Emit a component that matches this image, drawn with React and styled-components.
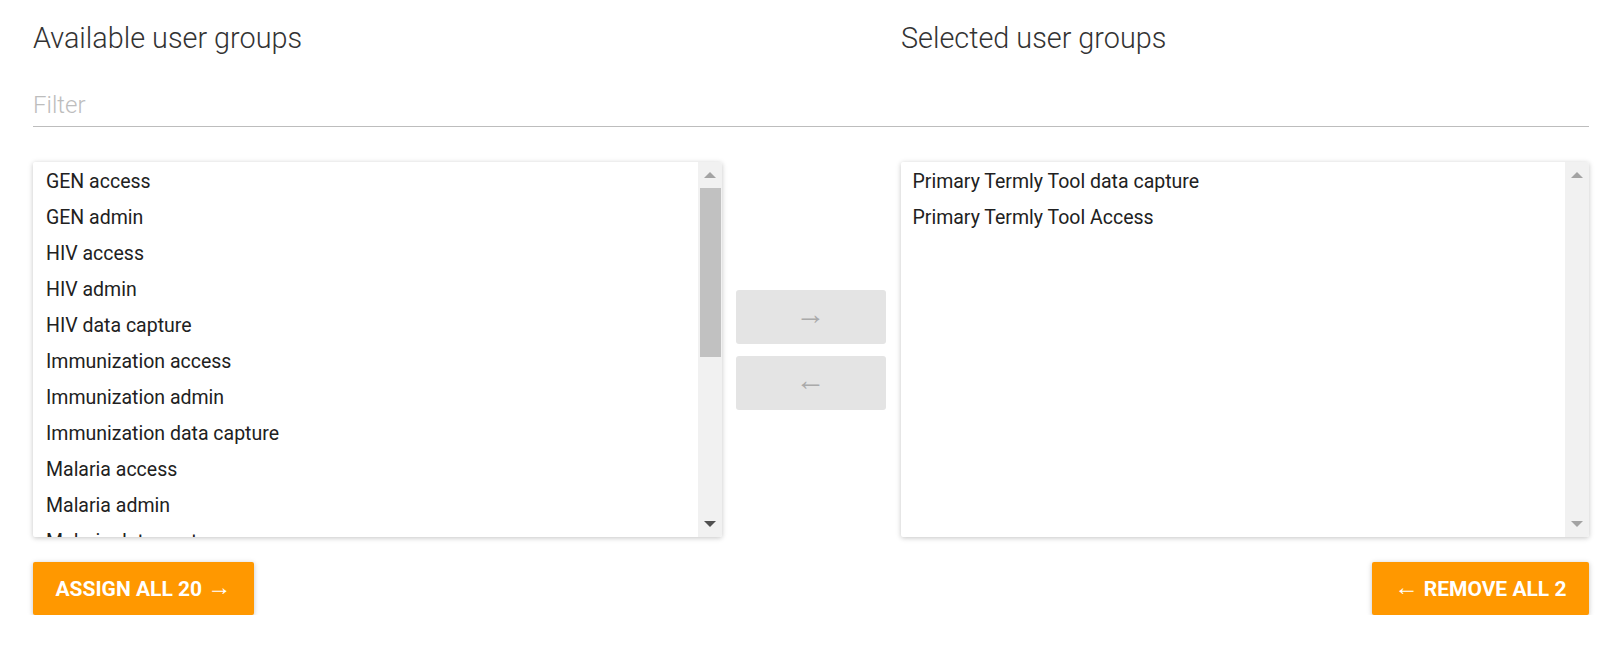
import React from 'react';
import styled, { createGlobalStyle } from 'styled-components';

const available = [
	'GEN access',
	'GEN admin',
	'HIV access',
	'HIV admin',
	'HIV data capture',
	'Immunization access',
	'Immunization admin',
	'Immunization data capture',
	'Malaria access',
	'Malaria admin',
	'Malaria data capture',
];

const selected = ['Primary Termly Tool data capture', 'Primary Termly Tool Access'];

const GlobalStyle = createGlobalStyle`
	body {
		margin: 0;
		background: #fff;
		font-family: Roboto, "Liberation Sans", sans-serif;
	}
`;

const Page = styled.div`
	padding: 0 18px 0 33px;
	width: 1607px;
	box-sizing: border-box;
`;

const HeadRow = styled.div`
	display: flex;
	height: 78px;
	align-items: center;
`;

const Heading = styled.h2`
	margin: 0;
	font-weight: 300;
	font-size: 28.8px;
	color: #333;
	width: ${(p) => p.width}px;
	margin-top: -2px;
`;

const FilterField = styled.div`
	height: 48px;
	border-bottom: 1px solid #bdbdbd;
	display: flex;
	align-items: center;
`;

const FilterInput = styled.input`
	border: 0;
	outline: none;
	width: 100%;
	font-family: Roboto, "Liberation Sans", sans-serif;
	font-weight: 300;
	font-size: 24px;
	color: #333;
	padding: 6px 0 0;
	background: transparent;

	&::placeholder {
		color: #bdbdbd;
	}
`;

const Main = styled.div`
	display: flex;
	margin-top: 35px;
	height: 375px;
`;

const Box = styled.div`
	flex: 1;
	display: flex;
	background: #fff;
	border-radius: 2px;
	box-shadow: 0 1px 6px rgba(0, 0, 0, 0.12), 0 1px 4px rgba(0, 0, 0, 0.12);
	overflow: hidden;
`;

const Items = styled.ul`
	flex: 1;
	margin: 0;
	padding: 2px 0 0 ${(p) => p.pad}px;
	list-style: none;
	overflow: hidden;
`;

const Item = styled.li`
	height: 36px;
	line-height: 36px;
	font-size: 19.5px;
	color: #212121;
	white-space: nowrap;
`;

const Track = styled.div`
	width: 24px;
	background: #f1f1f1;
	display: flex;
	flex-direction: column;
	align-items: center;
`;

const ArrowCell = styled.div`
	height: 26px;
	width: 100%;
	display: flex;
	align-items: center;
	justify-content: center;
`;

const Triangle = styled.div`
	width: 0;
	height: 0;
	border-left: 6px solid transparent;
	border-right: 6px solid transparent;
	${(p) =>
		p.down
			? `border-top: 6px solid ${p.active ? '#505050' : '#a3a3a3'};`
			: `border-bottom: 6px solid ${p.active ? '#505050' : '#a3a3a3'};`}
`;

const Thumb = styled.div`
	width: 21px;
	margin-left: 2px;
	height: 169px;
	background: #c1c1c1;
`;

const Spacer = styled.div`
	flex: 1;
`;

const Middle = styled.div`
	width: 179px;
	display: flex;
	flex-direction: column;
	align-items: center;
	justify-content: center;
	gap: 12px;
`;

const MoveButton = styled.button`
	width: 150px;
	height: 54px;
	border: 0;
	border-radius: 3px;
	background: #e4e4e4;
	color: #aaa;
	font-family: Roboto, "Liberation Sans", sans-serif;
	font-weight: 300;
	font-size: 30px;
	line-height: 1;
	padding: 0 0 6px;
	margin-left: -1px;
`;

const Footer = styled.div`
	display: flex;
	justify-content: space-between;
	margin-top: 25px;
`;

const ActionButton = styled.button`
	height: 53px;
	padding: 0 22.5px;
	border: 0;
	border-radius: 2px;
	background: #ff9800;
	color: #fff;
	font-family: Roboto, "Liberation Sans", sans-serif;
	font-weight: 700;
	font-size: 21px;
	text-transform: uppercase;
	box-shadow: 0 1px 6px rgba(0, 0, 0, 0.12), 0 1px 4px rgba(0, 0, 0, 0.12);
`;

const Arrow = styled.span`
	font-weight: 400;
	font-size: 24px;
	line-height: 0;
	position: relative;
	top: -1px;
`;

const Scrollbar = ({ thumb }) => (
	<Track>
		<ArrowCell>
			<Triangle />
		</ArrowCell>
		{thumb && <Thumb />}
		<Spacer />
		<ArrowCell>
			<Triangle down active={thumb} />
		</ArrowCell>
	</Track>
);

const App = () => {
	return (
		<Page>
			<GlobalStyle />
			<HeadRow>
				<Heading width={868}>Available user groups</Heading>
				<Heading>Selected user groups</Heading>
			</HeadRow>
			<FilterField>
				<FilterInput placeholder="Filter" />
			</FilterField>
			<Main>
				<Box>
					<Items pad={13}>
						{available.map((g) => (
							<Item key={g}>{g}</Item>
						))}
					</Items>
					<Scrollbar thumb />
				</Box>
				<Middle>
					<MoveButton>→</MoveButton>
					<MoveButton>←</MoveButton>
				</Middle>
				<Box>
					<Items pad={12}>
						{selected.map((g) => (
							<Item key={g}>{g}</Item>
						))}
					</Items>
					<Scrollbar />
				</Box>
			</Main>
			<Footer>
				<ActionButton>
					Assign all 20 <Arrow>→</Arrow>
				</ActionButton>
				<ActionButton>
					<Arrow>←</Arrow> Remove all 2
				</ActionButton>
			</Footer>
		</Page>
	);
};

export default App;
